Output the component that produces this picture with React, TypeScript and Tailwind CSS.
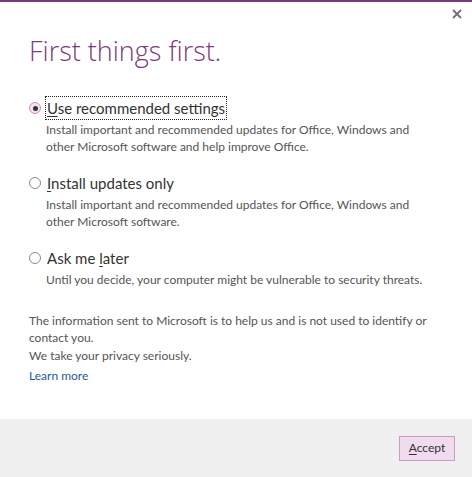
import { useState } from 'react';

const options = [
  {
    id: 'recommended',
    before: '',
    key: 'U',
    after: 'se recommended settings',
    desc: ['Install important and recommended updates for Office, Windows and', 'other Microsoft software and help improve Office.'],
  },
  {
    id: 'updates',
    before: '',
    key: 'I',
    after: 'nstall updates only',
    desc: ['Install important and recommended updates for Office, Windows and', 'other Microsoft software.'],
  },
  {
    id: 'later',
    before: 'Ask me ',
    key: 'l',
    after: 'ater',
    desc: ['Until you decide, your computer might be vulnerable to security threats.'],
  },
];

const Radio = ({ checked }: { checked: boolean }) => (
  <span
    className={`flex h-[12px] w-[12px] shrink-0 items-center justify-center rounded-full border ${
      checked ? 'border-[#c98fc3] bg-[#f3e3f1]' : 'border-[#8a8a8a] bg-white'
    }`}
  >
    {checked && <span className="h-[5px] w-[5px] rounded-full bg-[#333]" />}
  </span>
);

export default function App() {
  const [selected, setSelected] = useState('recommended');

  return (
    <div
      className="flex h-[477px] w-[472px] flex-col border-t-2 border-[#80397b] bg-white text-[#444]"
      style={{ fontFamily: 'Lato, "Noto Sans", sans-serif' }}
    >
      <div className="flex-1 px-[29px]">
        <div className="-mr-[21px] flex justify-end pt-[5px]">
          <button className="flex h-[14px] w-[14px] items-center justify-center">
            <svg width="10" height="10" viewBox="0 0 10 10">
              <path d="M1 1L9 9M9 1L1 9" stroke="#707070" strokeWidth="1.8" />
            </svg>
          </button>
        </div>
        <h1
          className="mt-[14px] text-[27px] font-light leading-[32px] text-[#80397b]"
          style={{ fontFamily: '"Open Sans", sans-serif' }}
        >
          First things first.
        </h1>

        <div className="mt-[30px] flex flex-col">
          {options.map((o, i) => (
            <div key={o.id} className={i === 0 ? '' : 'mt-[17px]'}>
              <label className="flex cursor-pointer items-center gap-[5px]" onClick={() => setSelected(o.id)}>
                <Radio checked={selected === o.id} />
                <span
                  className={`px-[1px] text-[15px] leading-[22px] text-[#333] ${
                    selected === o.id ? 'outline-dotted outline-1 outline-[#222]' : ''
                  }`}
                >
                  {o.before}
                  <span className="underline underline-offset-2">{o.key}</span>
                  {o.after}
                </span>
              </label>
              <div className="mt-[2px] pl-[17px] text-[12px] leading-[17px] text-[#555]">
                {o.desc.map((d) => (
                  <div key={d}>{d}</div>
                ))}
              </div>
            </div>
          ))}
        </div>

        <div className="mt-[24px] text-[12px] leading-[17px] text-[#555]">
          <p>The information sent to Microsoft is to help us and is not used to identify or</p>
          <p>contact you.</p>
          <p className="mt-[1px]">We take your privacy seriously.</p>
          <a href="#" className="mt-[3px] block text-[#2b579a]">
            Learn more
          </a>
        </div>
      </div>

      <div className="flex h-[58px] items-center justify-end bg-[#f0f0f0] pr-[17px]">
        <button className="h-[25px] w-[56px] border border-[#c99bc5] bg-[#f1dcef] text-[12px] text-[#333]">
          <span className="underline underline-offset-2">A</span>ccept
        </button>
      </div>
    </div>
  );
}
